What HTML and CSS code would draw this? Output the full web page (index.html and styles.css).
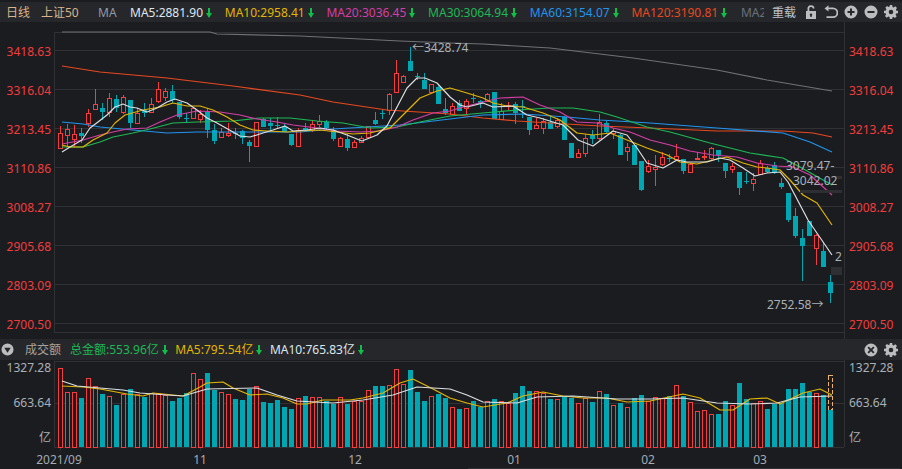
FILE: index.html
```html
<!DOCTYPE html>
<html lang="zh">
<head>
<meta charset="utf-8">
<title>上证50 日线</title>
<link rel="stylesheet" href="styles.css">
</head>
<body>
<svg class="defs" width="0" height="0" aria-hidden="true">
  <symbol id="down" viewBox="0 0 6 10"><path d="M2 0h2v5h2L3 10 0 5h2z"/></symbol>
  <symbol id="gear" viewBox="0 0 14 14"><path fill-rule="evenodd" d="M5.8 0h2.4l.3 1.9 1.2.5L11.3 1.3 13 3l-1.1 1.500.5 1.200L14 5.800v2.400l-1.900.3-.5 1.200L12.700 11.300 11 13l-1.500-1.100-1.200.5L8.200 14H5.800l-.3-1.900-1.200-.5L2.700 12.700 1 11l1.100-1.500-.5-1.200L0 8.200V5.800l1.900-.3.5-1.200L1.300 2.700 3 1l1.500 1.100 1.200-.5zM7 4.700a2.300 2.300 0 1 0 0 4.600 2.300 2.300 0 0 0 0-4.600z"/></symbol>
</svg>

<header class="bar top-bar">
  <span class="tag w-first">日线</span>
  <span class="tag w-name">上证50</span>
  <span class="ma-title">MA</span>
  <span class="item c-white">MA5:2881.90<svg class="arr"><use href="#down"/></svg></span>
  <span class="item c-yellow">MA10:2958.41<svg class="arr"><use href="#down"/></svg></span>
  <span class="item c-pink">MA20:3036.45<svg class="arr"><use href="#down"/></svg></span>
  <span class="item c-green">MA30:3064.94<svg class="arr"><use href="#down"/></svg></span>
  <span class="item c-blue">MA60:3154.07<svg class="arr"><use href="#down"/></svg></span>
  <span class="item c-orange">MA120:3190.81<svg class="arr"><use href="#down"/></svg></span>
  <span class="clipped">MA2</span>
  <span class="tag reset">重载</span>
  <span class="tools">
    <svg class="ico" viewBox="0 0 14 14"><path fill-rule="evenodd" d="M2 6h1.500V4a3.500 3.500 0 0 1 7-.6H8.700A1.700 1.700 0 0 0 5.300 4v2H12v8H2zM7 8.500a1.200 1.200 0 0 0-.7 2.200V12h1.400v-1.300A1.200 1.200 0 0 0 7 8.500z"/></svg>
    <svg class="ico" viewBox="0 0 14 14"><path d="M0.500 3.500 4.500 0.300v2.200H9a4.700 4.700 0 0 1 0 10.500H2.500v-1.700H9a3 3 0 0 0 0-7H4.500v2.200z"/></svg>
    <svg class="ico" viewBox="0 0 14 14"><path fill-rule="evenodd" d="M7 .5a6.500 6.500 0 1 1 0 13 6.500 6.500 0 0 1 0-13zM6 3.500v2.500H3.500v2H6v2.500h2V8h2.500V6H8V3.500z"/></svg>
    <svg class="ico" viewBox="0 0 14 14"><path fill-rule="evenodd" d="M7 .5a6.500 6.500 0 1 1 0 13 6.500 6.500 0 0 1 0-13zM3.500 6v2h7V6z"/></svg>
    <svg class="ico"><use href="#gear"/></svg>
  </span>
</header>

<section class="row price-row">
  <div class="axis axis-left price-axis c-axis-red">
    <span>3418.63</span><span>3316.04</span><span>3213.45</span><span>3110.86</span><span>3008.27</span><span>2905.68</span><span>2803.09</span><span>2700.50</span>
  </div>
  <svg class="chart" id="price" width="790" height="317" viewBox="54 22 790 317">
    <g class="frame">
      <path d="M54.500 32.500H844.500M54.500 32V332M844.500 22V339M54 332.500H844"/>
      <path d="M54 50.500H844M54 89.500H844M54 128.500H844M54 167.500H844M54 206.500H844M54 245.500H844M54 284.500H844M54 323.500H844"/>
    </g>
    <g id="candles"></g>
    <g class="lines">
      <polyline class="l-grey" points="62,32 210,32 217,34 300,36 400,41 450,43 483,44 550,48 633,58 717,70 767,80 832,91"/>
      <polyline class="l-orange" points="62,66 100,72 167,78 233,86 300,95 333,102 380,109 387,110 450,114 483,118 517,121 550,123 600,126 650,128 717,131 783,131 813,133 832,137"/>
      <polyline class="l-blue" points="62,122 83,124 100,127 133,130 167,133 197,132 233,132 267,132 300,132 333,129 367,127 400,125 450,119 483,115 523,114 567,117 600,120 650,123 717,128 783,133 810,142 832,152"/>
      <polyline class="l-green" points="62,147 83,147 100,142 113,137 133,133 150,129 173,123 197,122 233,121 260,118 290,118 317,121 343,123 370,128 397,127 420,122 450,116 483,113 517,110 550,108 573,108 600,112 617,117 647,127 670,132 710,143 750,153 783,158 800,167 832,185"/>
      <polyline class="l-pink" points="62,144 83,140 100,135 113,132 127,129 147,128 160,122 177,115 197,111 220,112 240,115 257,119 277,122 293,125 317,128 337,131 360,132 380,131 397,127 413,120 433,113 450,111 463,107 483,102 500,98 523,97 540,105 560,112 577,122 597,123 613,128 630,132 650,140 670,145 690,151 713,155 737,157 757,163 777,166 793,167 810,175 832,195"/>
      <polyline class="l-yellow" points="62,145 70,147 83,147 93,140 107,133 115,123 125,115 143,110 160,107 173,103 187,106 200,106 213,110 227,117 240,125 253,130 267,131 287,132 300,131 320,130 337,132 353,134 370,133 390,128 403,115 420,98 437,91 450,88 467,93 483,98 493,103 507,106 523,107 543,113 560,120 577,133 593,135 610,133 627,140 647,148 667,155 680,162 697,164 713,160 727,157 743,163 757,167 767,168 780,170 790,180 803,195 817,203 832,225"/>
      <polyline class="l-white" points="62,152 70,147 82,140 90,128 98,122 107,115 115,107 123,104 130,107 137,108 147,112 157,108 167,102 175,99 187,103 197,110 207,118 217,123 233,132 240,136 250,137 263,133 273,130 285,126 293,131 307,130 320,128 333,130 347,135 362,141 377,135 387,126 397,107 407,88 417,78 425,78 437,83 450,97 460,105 467,107 483,103 493,107 513,106 527,115 540,118 553,122 563,125 578,140 593,146 613,131 627,135 637,148 647,163 663,168 677,160 687,162 707,162 720,158 730,160 743,168 755,176 767,173 780,172 788,182 808,220 832,255"/>
    </g>
    <g class="strips">
      <rect x="836" y="176" width="6" height="3"/>
      <rect x="800" y="190" width="42" height="3"/>
      <rect x="831" y="267" width="11" height="8"/>
    </g>
    <g class="notes">
      <text x="412" y="52">←3428.74</text>
      <text x="786" y="170">3079.47-</text>
      <text x="793" y="185">3042.02</text>
      <text x="835" y="261">2</text>
      <text x="767" y="309">2752.58→</text>
    </g>
  </svg>
  <div class="axis axis-right price-axis c-axis-red">
    <span>3418.63</span><span>3316.04</span><span>3213.45</span><span>3110.86</span><span>3008.27</span><span>2905.68</span><span>2803.09</span><span>2700.50</span>
  </div>
</section>

<header class="bar vol-bar">
  <svg class="ico vol-toggle" viewBox="0 0 14 14"><path fill-rule="evenodd" d="M7 .5a6.500 6.500 0 1 1 0 13 6.500 6.500 0 0 1 0-13zM3.500 5 7 10.500 10.500 5z"/></svg>
  <span class="vol-name">成交额</span>
  <span class="vitem c-green">总金额:553.96亿<svg class="arr"><use href="#down"/></svg></span>
  <span class="vitem c-yellow">MA5:795.54亿<svg class="arr"><use href="#down"/></svg></span>
  <span class="vitem c-white">MA10:765.83亿<svg class="arr"><use href="#down"/></svg></span>
  <span class="tools vol-tools">
    <svg class="ico" viewBox="0 0 14 14"><path fill-rule="evenodd" d="M7 .5a6.500 6.500 0 1 1 0 13 6.500 6.500 0 0 1 0-13zM4.800 3.500 3.500 4.800 5.700 7 3.500 9.200l1.300 1.300L7 8.300l2.200 2.200 1.300-1.300L8.300 7l2.200-2.200-1.300-1.300L7 5.700z"/></svg>
    <svg class="ico"><use href="#gear"/></svg>
  </span>
</header>

<section class="row vol-row">
  <div class="axis axis-left vol-axis c-axis-grey">
    <span>1327.28</span><span>663.64</span><span>亿</span>
  </div>
  <svg class="chart vol-chart" id="volume" width="790" height="109" viewBox="54 360 790 109">
    <g class="frame">
      <path d="M54 361.500H844M54.500 361V447M844.500 360V447M54 447.500H844M54 403.500H844"/>
      <path d="M60.500 448V451M200.500 448V451M354.500 448V451M515.500 448V451M648.500 448V451M760.500 448V451"/>
    </g>
    <g id="bars"></g>
    <g class="lines">
      <polyline class="l-yellow" points="62,386 83,387 100,389 127,394 143,396 153,393 183,396 200,387 207,383 223,382 233,388 250,395 267,394 283,398 297,404 307,404 323,400 350,400 363,398 383,393 400,383 413,379 433,389 450,398 467,403 483,407 507,403 523,396 543,392 563,396 583,398 607,398 627,402 650,401 683,394 700,398 720,410 733,410 750,399 767,398 780,404 803,393 820,389 832,395"/>
      <polyline class="l-white" points="62,381 77,386 100,388 123,390 140,393 167,395 183,396 207,389 257,388 277,395 297,401 333,403 363,400 393,395 417,387 450,389 467,395 483,402 517,403 537,397 573,396 617,399 650,399 683,398 717,403 750,404 777,403 800,397 832,396"/>
    </g>
    <rect class="dash" x="828.500" y="375.500" width="4" height="34"/>
    <rect class="scroll-track" x="468" y="468" width="432" height="1"/>
    <g class="dates">
      <text x="59" y="464">2021/09</text>
      <text x="200" y="464">11</text>
      <text x="355" y="464">12</text>
      <text x="514" y="464">01</text>
      <text x="648" y="464">02</text>
      <text x="760" y="464">03</text>
    </g>
  </svg>
  <div class="axis axis-right vol-axis c-axis-grey">
    <span>1327.28</span><span>663.64</span><span>亿</span>
  </div>
</section>
<script src="chart.js"></script>
</body>
</html>
```

FILE: styles.css
```css
* { box-sizing: border-box; }
html, body { margin: 0; padding: 0; }
body {
  width: 902px;
  height: 469px;
  overflow: hidden;
  background: #1b1c20;
  font-family: "Noto Sans", "Noto Sans CJK SC", sans-serif;
  font-size: 12px;
  line-height: 16px;
  padding-top: 2px;
}
.defs { position: absolute; }

.bar { display: flex; align-items: center; background: #26272b; white-space: nowrap; }
.top-bar { height: 20px; padding-left: 6px; }
.vol-bar { height: 21px; padding-left: 1px; }

.tag { color: #d9b48a; padding-top: 1px; }
.w-first { width: 35px; }
.w-name { width: 57px; }
.ma-title { width: 32px; color: #8e9aa6; padding-top: 1px; }
.item { display: inline-flex; align-items: center; margin-right: 12.750px; padding-top: 1px; }
.clipped { width: 23px; overflow: hidden; color: #66717c; margin-left: 1px; padding-top: 1px; }
.reset { margin-left: 8px; color: #b9c4cc; }

.arr { width: 6px; height: 10px; margin-left: 3px; fill: #0fc048; }

.tools { display: flex; gap: 6px; margin-left: auto; padding-right: 4px; }
.ico { width: 14px; height: 14px; fill: #bcbdbf; }
.vol-toggle { width: 13px; height: 13px; margin-right: 11px; }
.vol-name { width: 45px; color: #a8a29c; }
.vitem { display: inline-flex; align-items: center; margin-right: 7.500px; }

.c-white { color: #dde7f0; fill: #dde7f0; }
.c-yellow { color: #e3b505; }
.c-pink { color: #d43ea6; }
.c-green { color: #1db954; }
.c-blue { color: #2094ee; }
.c-orange { color: #e8481e; }
.c-axis-red { color: #f23c3c; }
.c-axis-grey { color: #a9b1b8; }

.row { display: flex; align-items: flex-start; }
.price-row { height: 317px; }
.vol-row { height: 109px; }
.chart { display: block; flex: none; overflow: visible; }

.axis { display: flex; flex-direction: column; flex: none; }
.axis-left { width: 54px; padding-right: 3px; align-items: flex-end; position: relative; z-index: 1; }
.axis-right { width: 58px; padding-left: 5px; align-items: flex-start; }
.price-axis { padding-top: 10px; }
.price-axis span { height: 39px; line-height: 39px; }
.vol-axis span { height: 35px; line-height: 16px; }

.frame path { fill: none; stroke: #303135; stroke-width: 1; shape-rendering: crispEdges; }
.lines polyline { fill: none; stroke-width: 1.200; stroke-linejoin: round; }
.l-grey { stroke: #6f7175; }
.l-orange { stroke: #e8481e; }
.l-blue { stroke: #2094ee; }
.l-green { stroke: #1db954; }
.l-pink { stroke: #d43ea6; }
.l-yellow { stroke: #e3b505; }
.l-white { stroke: #dcdfe2; }

.strips rect { fill: #2e2f33; }
.scroll-track { fill: #2e2f33; }
.notes text { fill: #a9b1b8; font-size: 12px; }
.dates text { fill: #a3abb3; font-size: 12px; text-anchor: middle; }

.wick { stroke-width: 1; shape-rendering: crispEdges; }
.wick.up { stroke: #f63c3c; }
.wick.dn { stroke: #00a7b3; }
.body { shape-rendering: crispEdges; }
.body.up { fill: #1b1c20; stroke: #f63c3c; stroke-width: 1; }
.body.dn { fill: #00a7b3; }
.dash { fill: none; stroke: #edb36c; stroke-dasharray: 4 2; stroke-width: 1; shape-rendering: crispEdges; }
```

FILE: chart.js
```js
// r = red (hollow) day, t = teal day: [kind, bodyTop, bodyBottom, high, low, volumeTop]
var days = [
 ['r',133,148,126,148,368],['r',129,135,124,147,392],['r',134,139,125,147,392],['t',133,136,128,143,398],
 ['r',113,123,109,127,378],['r',104,109,89,110,386],['t',108,112,103,120,394],['r',98,112,93,117,396],
 ['t',99,108,95,112,405],['r',97,112,95,114,394],['t',100,123,100,128,389],['r',113,123,108,123,394],
 ['t',110,113,103,117,397],['r',104,112,98,113,393],['r',89,101,82,103,393],['r',91,97,88,101,395],
 ['t',91,100,85,103,401],['t',102,117,102,119,398],['t',118,119,113,123,393],['r',108,118,107,119,373],
 ['r',114,119,110,123,379],['t',112,130,108,138,373],['t',130,141,124,144,390],['r',132,137,128,138,392],
 ['r',133,135,123,137,394],['t',133,134,128,139,399],['t',131,138,130,144,400],['t',142,146,140,162,389],
 ['r',122,146,122,147,386],['t',119,127,118,127,402],['t',123,126,118,130,403],['t',125,126,117,129,400],
 ['t',127,132,124,132,407],['t',134,145,134,146,409],['r',130,146,128,146,398],['t',128,130,123,131,396],
 ['r',124,130,120,132,397],['r',121,124,115,127,397],['t',122,128,120,130,401],['t',130,139,127,141,404],
 ['r',138,146,137,147,397],['t',139,148,134,151,404],['r',142,147,140,147,401],['r',138,142,136,143,401],
 ['r',126,137,126,138,390],['t',120,124,112,125,386],['t',113,114,110,119,386],['r',94,110,93,115,385],
 ['r',73,92,60,92,369],['r',76,82,75,83,384],['t',61,71,47,71,370],['t',76,77,73,80,392],
 ['t',80,89,73,89,401],['r',84,92,84,93,396],['t',87,104,86,104,394],['t',109,113,98,115,398],
 ['r',106,114,103,114,407],['t',103,111,100,111,409],['r',101,108,99,115,408],['t',98,99,93,103,401],
 ['t',101,104,100,108,407],['r',94,101,93,101,401],['t',92,119,92,119,399],['r',111,119,103,119,401],
 ['r',105,106,102,110,403],['t',104,113,102,124,393],['t',106,107,100,118,386],['t',117,130,117,135,391],
 ['r',125,128,118,128,391],['r',121,128,118,134,393],['t',122,129,116,129,399],['r',120,126,118,128,399],
 ['t',117,140,116,140,397],['t',143,158,143,158,398],['r',153,157,149,158,403],['r',138,153,134,157,398],
 ['t',135,139,130,144,402],['r',122,138,114,140,391],['t',123,132,121,133,394],['r',131,133,128,139,405],
 ['t',135,155,134,155,403],['r',147,151,143,161,407],['t',145,165,145,165,398],['t',161,190,161,191,395],
 ['r',166,171,160,173,401],['r',167,169,155,186,397],['r',157,164,152,166,398],['t',158,159,154,162,396],
 ['r',156,159,144,160,385],['t',159,171,159,174,396],['r',164,172,163,172,402],['r',158,159,152,160,411],
 ['r',156,157,150,160,410],['r',148,158,147,160,414],['t',150,155,150,162,414],['t',163,171,163,178,401],
 ['r',166,169,163,173,405],['t',172,188,172,195,383],['t',181,182,172,184,399],['r',179,183,173,191,403],
 ['r',163,174,160,175,401],['t',168,172,166,173,409],['t',165,173,162,174,404],['t',183,187,178,189,403],
 ['t',193,220,193,222,389],['t',216,236,208,238,389],['t',238,246,229,281,383],['t',221,236,221,236,392],
 ['r',235,248,234,265,393],['t',251,267,242,267,395],['t',282,293,275,303,410]
];
var NS = 'http://www.w3.org/2000/svg';
function add(parent, tag, attrs) {
  var el = document.createElementNS(NS, tag);
  for (var k in attrs) el.setAttribute(k, attrs[k]);
  parent.appendChild(el);
}
var candles = document.getElementById('candles');
var bars = document.getElementById('bars');
days.forEach(function (d, i) {
  var cx = 60.5 + 7 * i, tone = d[0] === 'r' ? 'up' : 'dn';
  add(candles, 'line', { 'class': 'wick ' + tone, x1: cx, x2: cx, y1: d[3], y2: d[4] });
  if (tone === 'up') {
    add(candles, 'rect', { 'class': 'body up', x: cx - 2, y: d[1] + 0.5, width: 4, height: d[2] - d[1] });
    add(bars, 'rect', { 'class': 'body up', x: cx - 2, y: d[5] + 0.5, width: 4, height: 447 - d[5] });
  } else {
    add(candles, 'rect', { 'class': 'body dn', x: cx - 2.5, y: d[1], width: 5, height: Math.max(1, d[2] - d[1]) });
    add(bars, 'rect', { 'class': 'body dn', x: cx - 2.5, y: d[5], width: 5, height: 447 - d[5] });
  }
});
```
